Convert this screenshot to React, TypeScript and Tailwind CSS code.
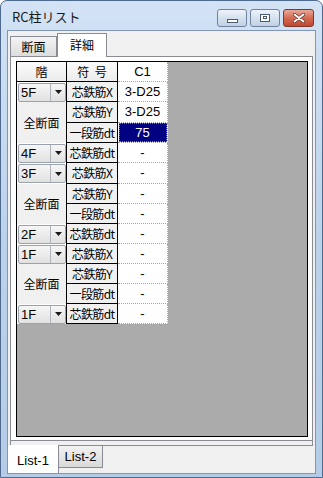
import React from "react";

const jp = "font-['Noto_Sans_CJK_JP',sans-serif]";
const lat = "font-['Liberation_Sans',sans-serif]";

type Row =
  | { kind: "combo"; floor: string; label: string; value: string }
  | { kind: "span"; label: string; value: string; selected?: boolean }
  | { kind: "cont"; label: string; value: string; selected?: boolean };

const rows: Row[] = [
  { kind: "combo", floor: "5F", label: "芯鉄筋X", value: "3-D25" },
  { kind: "span", label: "芯鉄筋Y", value: "3-D25" },
  { kind: "cont", label: "一段筋dt", value: "75", selected: true },
  { kind: "combo", floor: "4F", label: "芯鉄筋dt", value: "-" },
  { kind: "combo", floor: "3F", label: "芯鉄筋X", value: "-" },
  { kind: "span", label: "芯鉄筋Y", value: "-" },
  { kind: "cont", label: "一段筋dt", value: "-" },
  { kind: "combo", floor: "2F", label: "芯鉄筋dt", value: "-" },
  { kind: "combo", floor: "1F", label: "芯鉄筋X", value: "-" },
  { kind: "span", label: "芯鉄筋Y", value: "-" },
  { kind: "cont", label: "一段筋dt", value: "-" },
  { kind: "combo", floor: "1F", label: "芯鉄筋dt", value: "-" },
];

const Combo = ({ v }: { v: string }) => (
  <div className="flex h-[19px] w-[48px] items-stretch rounded-[2px] border border-[#9aa3ad] bg-gradient-to-b from-[#f6f6f6] to-[#e1e1e1]">
    <span className={`${lat} flex-1 pl-[2px] text-[13px] leading-[17px] text-black`}>{v}</span>
    <span className="flex w-[15px] items-center justify-center border-l border-[#b0b5bb]">
      <svg width="7" height="4" viewBox="0 0 7 4">
        <path d="M0 0h7L3.5 4z" fill="#1a1a1a" />
      </svg>
    </span>
  </div>
);

const TitleButton = ({ kind }: { kind: "min" | "max" | "close" }) => {
  if (kind === "close") {
    return (
      <div className="flex h-[18px] w-[31px] items-center justify-center rounded-[3px] border border-[#7a3a32] bg-gradient-to-b from-[#e9a898] via-[#d36a55] to-[#c2462f]">
        <svg width="12" height="10" viewBox="0 0 12 10">
          <path d="M1.5 1.5l9 7M10.5 1.5l-9 7" stroke="#5a2a22" strokeWidth="3.4" strokeLinecap="round" />
          <path d="M1.5 1.5l9 7M10.5 1.5l-9 7" stroke="#ffffff" strokeWidth="2" strokeLinecap="round" />
        </svg>
      </div>
    );
  }
  return (
    <div className="flex h-[18px] w-[30px] items-center justify-center rounded-[3px] border border-[#6f819b] bg-gradient-to-b from-[#eef3fa] via-[#d5e1ef] to-[#c1d1e5]">
      {kind === "min" ? (
        <div className="mt-[5px] h-[4px] w-[11px] border border-[#4a5a70] bg-white" />
      ) : (
        <div className="h-[8px] w-[10px] border border-[#4a5a70] bg-white">
          <div className="mx-auto mt-[1px] h-[3px] w-[4px] border border-[#4a5a70]" />
        </div>
      )}
    </div>
  );
};

const hdr = `${jp} flex items-center justify-center border-b border-r border-black bg-gradient-to-b from-[#fbfbfb] to-[#ececec] text-[12px] text-black`;
const lbl = `${jp} flex items-center justify-center overflow-hidden whitespace-nowrap border-b border-r border-black bg-[#f0f0f0] text-[12px] tracking-[-0.6px] text-black`;

export default function App() {
  return (
    <div className="h-[478px] w-[323px] bg-white">
      <div className="flex h-full w-full flex-col rounded-t-[7px] border border-[#4e6a8e] bg-gradient-to-b from-[#d3e3f5] via-[#bcd2eb] to-[#b5cce7]">
        {/* タイトルバー */}
        <div className="flex h-[29px] items-start">
          <span className={`${jp} ml-[11px] mt-[6px] text-[13px] text-[#1a1a1a]`}>RC柱リスト</span>
          <div className="ml-auto mr-[8px] mt-[8px] flex gap-[3px]">
            <TitleButton kind="min" />
            <TitleButton kind="max" />
            <TitleButton kind="close" />
          </div>
        </div>

        {/* クライアント領域 */}
        <div className="mx-[6px] mb-[3px] flex flex-1 flex-col border border-[#8096b4] bg-[#f0f0f0]">
          <div className="flex h-[25px] items-end pl-[2px]">
            <div className={`${jp} flex h-[20px] w-[47px] items-center justify-center border border-b-0 border-[#898c95] bg-gradient-to-b from-[#f4f4f4] to-[#dcdcdc] text-[12px] text-black`}>
              断面
            </div>
            <div className={`${jp} relative z-10 -mb-px flex h-[24px] w-[50px] items-start justify-center border border-b-0 border-[#898c95] bg-white pt-[2px] text-[12px] text-black`}>
              詳細
            </div>
          </div>

          <div className="mx-[2px] flex h-[385px] flex-col border border-[#898c95] bg-white pb-[3px] pl-[5px] pr-[4px] pt-[4px]">
            <div className="flex-1 border border-black bg-[#ababab]">
              <div className="grid w-[151px] grid-cols-[50px_51px_50px] grid-rows-[20px_20px_21px_20px_20px_21px_20px_20px_20px_20px_20px_20px_20px]">
                <div className={hdr}>階</div>
                <div className={hdr}>符&nbsp;&nbsp;号</div>
                <div className={`${lat} flex items-center justify-center border-b border-r border-dotted border-[#a8a8a8] bg-white text-[13px] text-black`}>
                  C1
                </div>
                {rows.map((r, i) => (
                  <React.Fragment key={i}>
                    {r.kind === "combo" && (
                      <div className="flex items-center border-r border-black bg-white pl-[1px]">
                        <Combo v={r.floor} />
                      </div>
                    )}
                    {r.kind === "span" && (
                      <div className={`${jp} row-span-2 flex items-center justify-center border-r border-black bg-[#f0f0f0] text-[12px] text-black`}>
                        全断面
                      </div>
                    )}
                    <div className={lbl}>{r.label}</div>
                    <div className={`${lat} flex items-center justify-center border-b border-r border-dotted border-[#a8a8a8] bg-white text-[13px]`}>
                      {"selected" in r && r.selected ? (
                        <div className="flex h-[19px] w-[48px] items-center justify-center border border-dotted border-[#7f7f7f] bg-[#000080] text-white">
                          {r.value}
                        </div>
                      ) : (
                        <span className="text-black">{r.value}</span>
                      )}
                    </div>
                  </React.Fragment>
                ))}
              </div>
            </div>
          </div>

          <div className="mx-[2px] h-[5px] border border-t-0 border-[#898c95] bg-[#f0f0f0]" />

          <div className="flex flex-1 items-start">
            <div className={`${lat} relative -mt-px flex h-[28px] w-[51px] items-center justify-center border-r border-[#898c95] bg-white pt-[3px] text-[13px] text-black`}>
              List-1
            </div>
            <div className={`${lat} flex h-[22px] w-[44px] items-center justify-center border border-l-0 border-t-0 border-[#898c95] bg-gradient-to-b from-[#f2f2f2] to-[#d9d9d9] text-[13px] text-black`}>
              List-2
            </div>
          </div>
        </div>
      </div>
    </div>
  );
}
